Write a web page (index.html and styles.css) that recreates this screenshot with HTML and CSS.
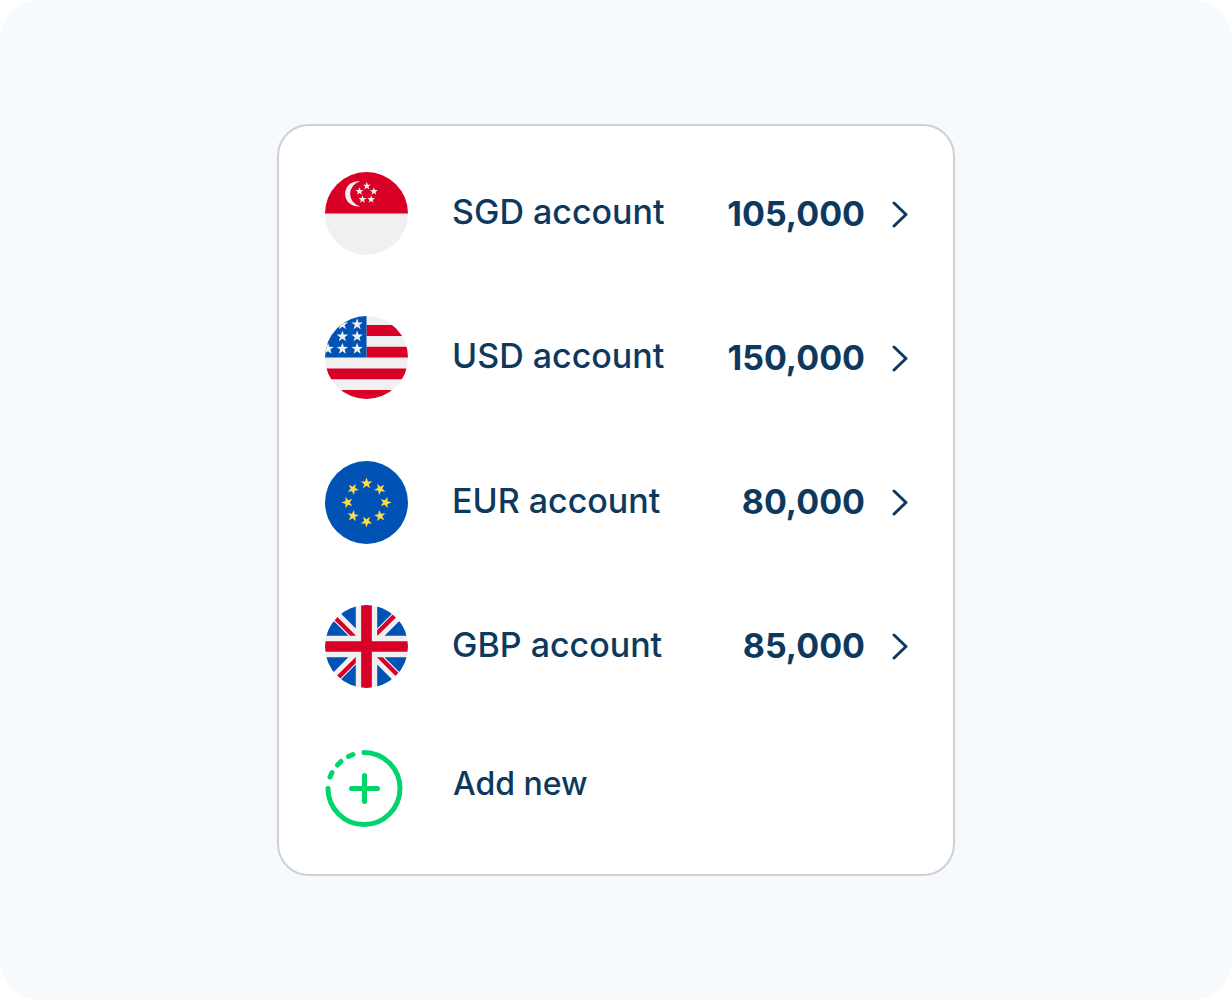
FILE: index.html
```html
<!DOCTYPE html>
<html lang="en">
<head>
<meta charset="utf-8">
<meta name="viewport" content="width=device-width, initial-scale=1">
<title>Accounts</title>
<link rel="stylesheet" href="styles.css">
</head>
<body>
<svg class="defs" aria-hidden="true">
  <defs>
    <path id="star" d="M0-10 2.35-3.24 9.51-3.09 3.8 1.24 5.88 8.09 0 4-5.88 8.09-3.8 1.24-9.51-3.09-2.35-3.24z"/>
    <clipPath id="disc"><circle cx="124" cy="124" r="124"/></clipPath>
  </defs>
</svg>
<main class="stage">
  <section class="card" aria-label="Accounts">
    <ul class="accounts">
      <li>
        <a class="row" href="#sgd">
          <svg class="flag" viewBox="0 0 248 248" aria-hidden="true">
            <g clip-path="url(#disc)">
              <path fill="#f0f0f0" d="M0 0h248v248H0z"/>
              <path fill="#d80027" d="M0 0h248v124H0z"/>
              <g fill="#f0f0f0">
                <path d="M105 28.500a37.500 37.500 0 1 0 0 73.500a37.500 37.500 0 0 1 0-73.500z"/>
                <use href="#star" transform="translate(125 42) scale(1.250)"/>
                <use href="#star" transform="translate(103 58) scale(1.250)"/>
                <use href="#star" transform="translate(146 58) scale(1.250)"/>
                <use href="#star" transform="translate(112 82) scale(1.250)"/>
                <use href="#star" transform="translate(138 82) scale(1.250)"/>
              </g>
            </g>
          </svg>
          <span class="name">SGD account</span>
          <span class="amount">105,000</span>
          <svg class="chevron" viewBox="0 0 18 28" aria-hidden="true"><path d="M3 3l12 11.500L3 26"/></svg>
        </a>
      </li>
      <li>
        <a class="row" href="#usd">
          <svg class="flag" viewBox="0 0 248 248" aria-hidden="true">
            <g clip-path="url(#disc)">
              <path fill="#f0f0f0" d="M0 0h248v248H0z"/>
              <path fill="#d80027" d="M124 27h124v33H124zM124 92h124v32H124zM0 157h248v32H0zM0 221h248v27H0z"/>
              <path fill="#0052b4" d="M0 0h124v124H0z"/>
              <g fill="#f0f0f0">
                <use href="#star" transform="translate(96 25) scale(1.800)"/>
                <use href="#star" transform="translate(52 25) scale(1.800)"/>
                <use href="#star" transform="translate(96 61) scale(1.800)"/>
                <use href="#star" transform="translate(52 61) scale(1.800)"/>
                <use href="#star" transform="translate(96 98) scale(1.800)"/>
                <use href="#star" transform="translate(52 98) scale(1.800)"/>
                <use href="#star" transform="translate(9 98) scale(1.800)"/>
              </g>
            </g>
          </svg>
          <span class="name">USD account</span>
          <span class="amount">150,000</span>
          <svg class="chevron" viewBox="0 0 18 28" aria-hidden="true"><path d="M3 3l12 11.500L3 26"/></svg>
        </a>
      </li>
      <li>
        <a class="row" href="#eur">
          <svg class="flag" viewBox="0 0 248 248" aria-hidden="true">
            <circle cx="124" cy="124" r="124" fill="#0052b4"/>
            <g fill="#ffda44" transform="translate(124 124)">
              <use href="#star" transform="translate(0 -57) scale(1.800)"/>
              <use href="#star" transform="rotate(45) translate(0 -57) scale(1.800)"/>
              <use href="#star" transform="rotate(90) translate(0 -57) scale(1.800)"/>
              <use href="#star" transform="rotate(135) translate(0 -57) scale(1.800)"/>
              <use href="#star" transform="rotate(180) translate(0 -57) scale(1.800)"/>
              <use href="#star" transform="rotate(225) translate(0 -57) scale(1.800)"/>
              <use href="#star" transform="rotate(270) translate(0 -57) scale(1.800)"/>
              <use href="#star" transform="rotate(315) translate(0 -57) scale(1.800)"/>
            </g>
          </svg>
          <span class="name">EUR account</span>
          <span class="amount">80,000</span>
          <svg class="chevron" viewBox="0 0 18 28" aria-hidden="true"><path d="M3 3l12 11.500L3 26"/></svg>
        </a>
      </li>
      <li>
        <a class="row" href="#gbp">
          <svg class="flag" viewBox="0 0 248 248" aria-hidden="true">
            <g clip-path="url(#disc)">
              <path fill="#f0f0f0" d="M0 0h248v248H0z"/>
              <path fill="#0052b4" d="M92 0v70L22 0zM156 0v70L226 0zM92 248v-70L22 248zM156 248v-70L226 248zM0 92h70L0 22zM248 92h-70L248 22zM0 156h70L0 226zM248 156h-70L248 226z"/>
              <path fill="#d80027" d="M108 0h32v108h108v32H140v108h-32V140H0v-32h108z"/>
              <path fill="#d80027" d="M92 92H75L28 45l9-9 55 55zM156 92V75l47-47 9 9-55 55zM92 156v17l-47 47-9-9 55-55zM156 156h17l47 47-9 9-55-55z"/>
            </g>
          </svg>
          <span class="name">GBP account</span>
          <span class="amount">85,000</span>
          <svg class="chevron" viewBox="0 0 18 28" aria-hidden="true"><path d="M3 3l12 11.500L3 26"/></svg>
        </a>
      </li>
    </ul>
    <button class="add" type="button">
      <svg class="add-icon" viewBox="0 0 78 78" aria-hidden="true">
        <path d="M39 2.500a36 36 0 1 1-36 36M39.500 25.500v26M26.500 38.500h26M5 27l2-4.500M12.500 15l3.500-3.500M23.500 6.500l4.500-2"/>
      </svg>
      <span>Add new</span>
    </button>
  </section>
</main>
</body>
</html>
```
FILE: styles.css
```css
* { box-sizing: border-box; }

body {
  margin: 0;
  background: #fff;
  color: #0e395e;
  font-family: Inter, "Liberation Sans", sans-serif;
}

.defs {
  position: absolute;
  width: 0;
  height: 0;
}

.stage {
  display: flex;
  align-items: center;
  justify-content: center;
  min-height: 100vh;
  padding: 40px;
  border-radius: 40px;
  background: #f6fafd;
}

.card {
  width: 100%;
  max-width: 678px;
  padding: 46px 44px 46px 46px;
  border: 2px solid #cdd0d5;
  border-radius: 32px;
  background: #fff;
}

.accounts {
  display: flex;
  flex-direction: column;
  justify-content: space-between;
  min-height: 516px;
  margin: 0;
  padding: 0;
  list-style: none;
}

.row {
  display: flex;
  align-items: center;
  color: inherit;
  font-size: 34px;
  line-height: 44px;
  text-decoration: none;
}

.flag {
  flex: none;
  width: 83px;
  height: 83px;
  margin-right: 44px;
}

.name {
  flex: 1;
  padding-bottom: 3px;
  font-weight: 500;
}

.amount {
  font-weight: 700;
}

.chevron {
  flex: none;
  width: 18px;
  height: 28px;
  margin-left: 26px;
}

.chevron path,
.add-icon path {
  fill: none;
  stroke: currentColor;
  stroke-width: 3;
  stroke-linecap: round;
  stroke-linejoin: round;
}

.add {
  display: flex;
  align-items: center;
  gap: 50px;
  width: 100%;
  margin-top: 62px;
  padding: 0;
  border: 0;
  background: none;
  color: inherit;
  font: inherit;
  font-size: 32px;
  font-weight: 500;
  line-height: 40px;
  text-align: left;
  cursor: pointer;
}

.add span {
  padding-bottom: 10px;
}

.add-icon {
  flex: none;
  width: 78px;
  height: 78px;
  color: #00d56b;
}

.add-icon path {
  stroke-width: 5;
}
```
